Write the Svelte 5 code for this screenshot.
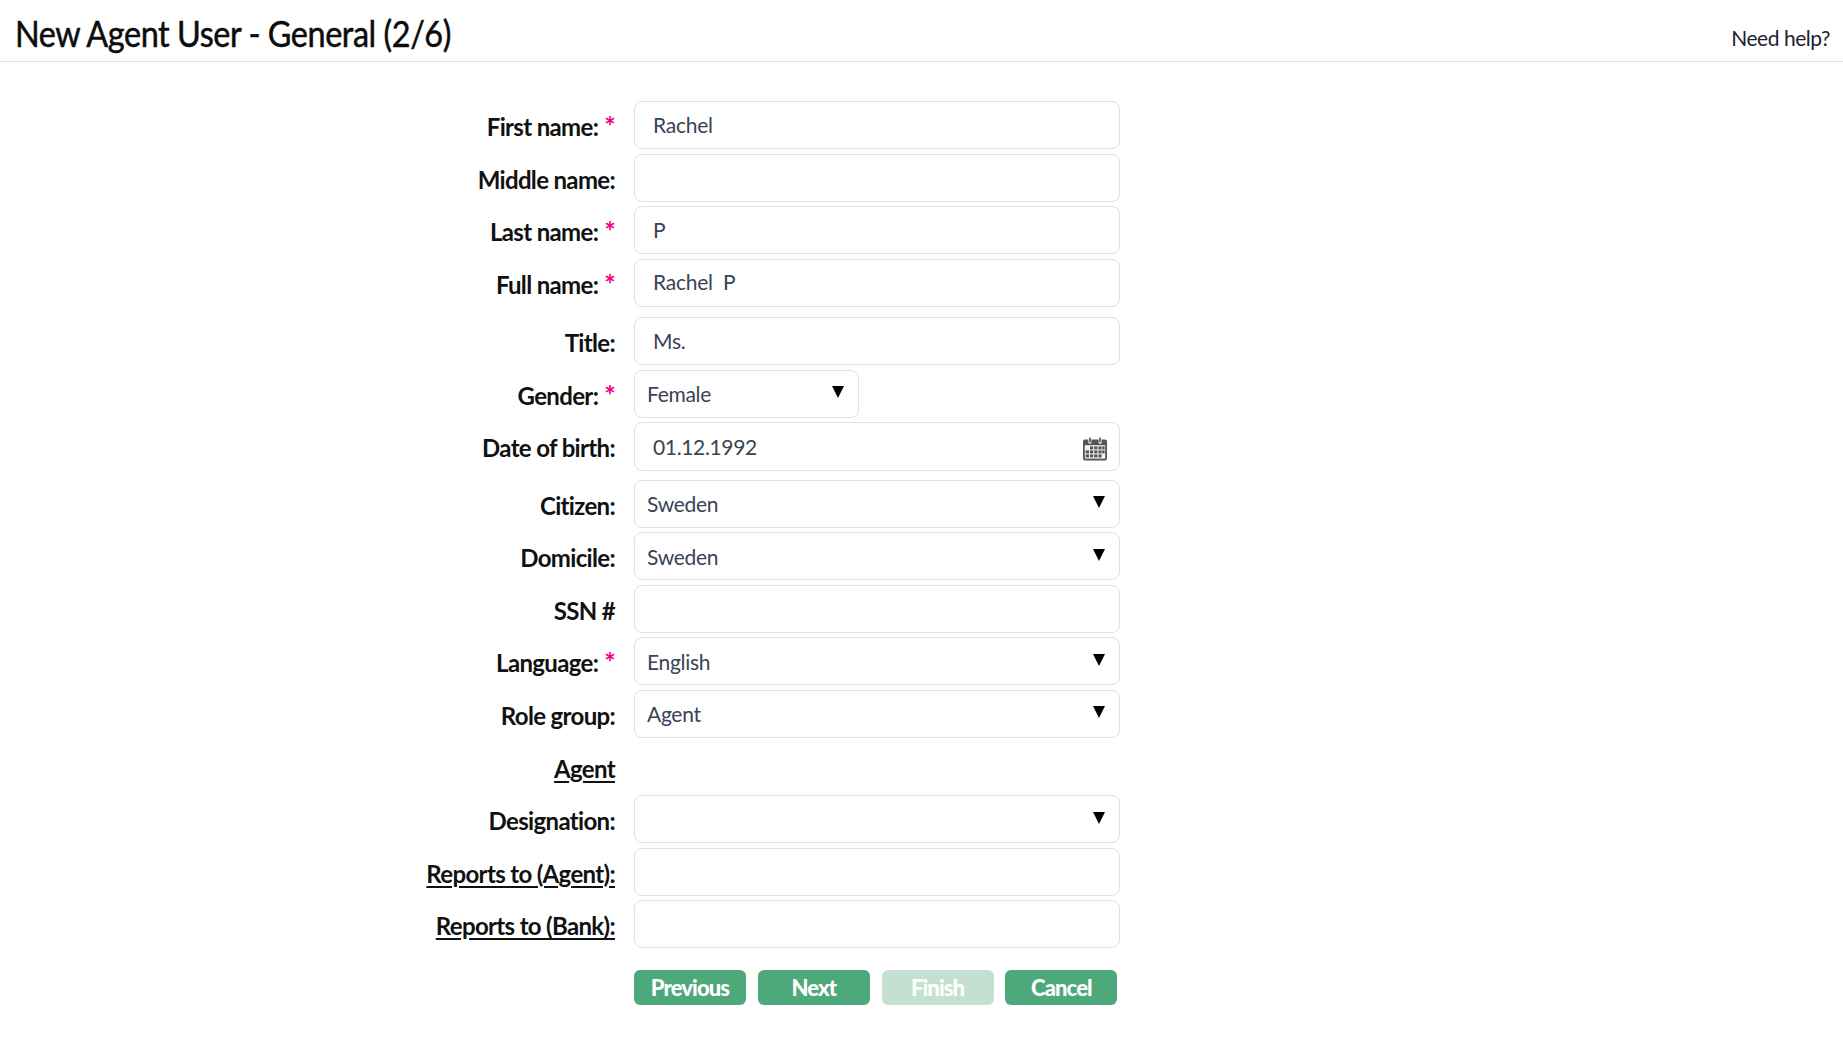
<script>
  const rows = [
    { label: 'First name:', req: true, kind: 'input', value: 'Rachel' },
    { label: 'Middle name:', kind: 'input', value: '' },
    { label: 'Last name:', req: true, kind: 'input', value: 'P' },
    { label: 'Full name:', req: true, kind: 'input', value: 'Rachel  P' },
    { label: 'Title:', kind: 'input', value: 'Ms.', cls: 'push' },
    { label: 'Gender:', req: true, kind: 'select', value: 'Female', cls: 'short' },
    { label: 'Date of birth:', kind: 'date', value: '01.12.1992', cls: 'tall' },
    { label: 'Citizen:', kind: 'select', value: 'Sweden' },
    { label: 'Domicile:', kind: 'select', value: 'Sweden' },
    { label: 'SSN #', kind: 'input', value: '' },
    { label: 'Language:', req: true, kind: 'select', value: 'English' },
    { label: 'Role group:', kind: 'select', value: 'Agent' },
    { label: 'Agent', kind: 'none', link: true },
    { label: 'Designation:', kind: 'select', value: '' },
    { label: 'Reports to (Agent):', kind: 'input', value: '', link: true },
    { label: 'Reports to (Bank):', kind: 'input', value: '', link: true },
  ];
  const buttons = [
    { text: 'Previous' },
    { text: 'Next' },
    { text: 'Finish', disabled: true },
    { text: 'Cancel' },
  ];
</script>

<header class="top">
  <h1>New Agent User - General (2/6)</h1>
  <span class="help">Need help?</span>
</header>

<form class="form" onsubmit={(e) => e.preventDefault()}>
  {#each rows as r}
    <div class="row {r.cls ?? ''}">
      <div class="label">
        <span class:link={r.link}>{r.label}</span>{#if r.req}<i>*</i>{/if}
      </div>
      {#if r.kind === 'input'}
        <div class="field"><span>{r.value}</span></div>
      {:else if r.kind === 'date'}
        <div class="field date">
          <span>{r.value}</span>
          <svg class="cal" width="26" height="24" viewBox="0 0 26 24">
            <path fill="#555" d="M3 2.6h3.4v2.6a1.5 1.5 0 0 0 3 0V2.6h7.2v2.6a1.5 1.5 0 0 0 3 0V2.6H23a2 2 0 0 1 2 2v17a2 2 0 0 1-2 2H3a2 2 0 0 1-2-2v-17a2 2 0 0 1 2-2z"/>
            <path fill="#555" d="M7.2.4h1.6v4.8H7.2zM17.2.4h1.6v4.8h-1.6z"/>
            <rect x="2.8" y="8.2" width="20.4" height="13.4" fill="#f4f4f4"/>
            <g fill="#555">
              <rect x="8" y="9.4" width="3.2" height="3"/><rect x="12.2" y="9.4" width="3.2" height="3"/><rect x="16.4" y="9.4" width="3.2" height="3"/><rect x="20.2" y="9.4" width="2.4" height="3"/>
              <rect x="3.6" y="13.4" width="3.4" height="3"/><rect x="8" y="13.4" width="3.2" height="3"/><rect x="12.2" y="13.4" width="3.2" height="3"/><rect x="16.4" y="13.4" width="3.2" height="3"/><rect x="20.2" y="13.4" width="2.4" height="3"/>
              <rect x="3.6" y="17.4" width="3.4" height="3"/><rect x="8" y="17.4" width="3.2" height="3"/><rect x="12.2" y="17.4" width="3.2" height="3"/><rect x="16.4" y="17.4" width="3.2" height="3"/>
            </g>
          </svg>
        </div>
      {:else if r.kind === 'select'}
        <div class="field sel"><span>{r.value}</span><b class="arrow"></b></div>
      {/if}
    </div>
  {/each}

  <div class="actions">
    {#each buttons as b}
      <button type="button" disabled={b.disabled}>{b.text}</button>
    {/each}
  </div>
</form>

<style>
  :global(body) { margin: 0; background: #fff; font-family: Lato, "Open Sans", sans-serif; color: #111; }

  .top {
    height: 61px;
    border-bottom: 1px solid #e1e1e1;
    padding: 0 13px 0 15px;
    display: flex; align-items: center; justify-content: space-between;
  }
  /* the original face is narrower than Lato */
  h1 {
    margin: 4px 0 0; font-size: 36px; font-weight: 400; letter-spacing: -.5px; color: #0c0c0c;
    -webkit-text-stroke: .5px #0c0c0c;
    transform: scaleX(.9); transform-origin: left center;
  }
  .help { font-size: 21px; margin-top: 14px; color: #1a2230; letter-spacing: -.45px; }

  .form { padding-top: 39px; display: flex; flex-direction: column; }
  .row {
    display: grid; grid-template-columns: 615px 486px; column-gap: 19px;
    min-height: 48px; margin-bottom: 4.6px; align-items: center;
  }
  .row.push { margin-top: 6px; }
  .row.tall { margin-top: -1px; margin-bottom: 9px; }
  .label {
    text-align: right; font-size: 24px; font-weight: 700; color: #111; letter-spacing: -.66px;
    padding-top: 3px;
  }
  .link { text-decoration: underline; text-underline-offset: 3px; }
  .label i { color: #ec008c; font-style: normal; margin-left: 6px; font-size: 27px; line-height: 1; font-weight: 700; }

  .field {
    height: 48px; box-sizing: border-box;
    border: 1px solid #e0e0e0; border-radius: 8px;
    padding: 0 18px 2px;
    display: flex; align-items: center; justify-content: space-between;
    font-size: 21px; color: #3a4256; white-space: pre; letter-spacing: -.25px;
  }
  .short .field { width: 225px; }
  .tall .field { height: 49px; }
  .date { padding-bottom: 0; letter-spacing: -.35px; }
  .sel { padding: 0 14px 0 12px; letter-spacing: -.3px; }
  .arrow {
    width: 0; height: 0; margin-top: -3px;
    border-left: 6.5px solid transparent; border-right: 6.5px solid transparent; border-top: 12px solid #000;
  }
  .cal { margin-right: -7px; margin-top: 5px; }

  .actions { display: flex; gap: 11.8px; margin-left: 634px; margin-top: 17px; }
  button {
    width: 112px; height: 35px; border: 0; border-radius: 6px;
    background: #4da97a; color: #fff;
    font: 900 22px Lato, sans-serif; letter-spacing: -.9px;
    padding: 0;
  }
  button:disabled { background: #c3e0d1; }
</style>
